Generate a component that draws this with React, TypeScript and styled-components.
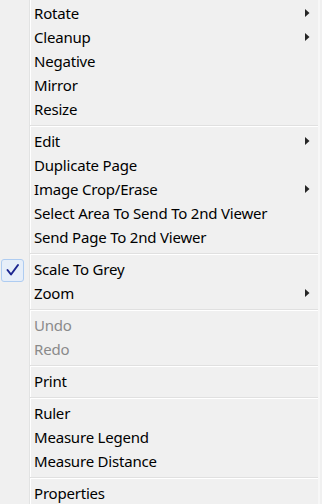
import React from 'react';
import styled, { createGlobalStyle } from 'styled-components';

const GlobalStyle = createGlobalStyle`
  html, body {
    margin: 0;
    padding: 0;
    background: #f0f0f0;
  }
`;

const Menu = styled.ul`
  list-style: none;
  margin: 0;
  padding: 2px 0 0 0;
  width: 320px;
  height: 504px;
  overflow: hidden;
  box-sizing: border-box;
  border-right: 2px solid #f7f7f7;
  background-color: #f0f0f0;
  background-image: linear-gradient(
    to right,
    transparent 29px,
    #e2e3e3 29px,
    #e2e3e3 30px,
    #ffffff 30px,
    #ffffff 31px,
    transparent 31px
  );
  font-family: 'Noto Sans', 'Open Sans', sans-serif;
  font-size: 15px;
  letter-spacing: -0.2px;
  color: #000;
`;

const Row = styled.li<{ $disabled?: boolean }>`
  display: grid;
  grid-template-columns: 34px 1fr 13px;
  align-items: center;
  height: 24px;
  color: ${(p) => (p.$disabled ? '#8a8a8a' : '#000')};
  white-space: nowrap;
`;

const Gutter = styled.span`
  display: flex;
  align-items: center;
  height: 24px;
  padding-left: 1px;
`;

const CheckBox = styled.span`
  display: flex;
  align-items: center;
  justify-content: center;
  width: 23px;
  height: 23px;
  box-sizing: border-box;
  border: 1px solid #aeccf1;
  border-radius: 3px;
  background: #e6eef9;
`;

const Label = styled.span`
  line-height: 22px;
  padding-bottom: 2px;
`;

const Arrow = styled.span`
  display: flex;
  align-items: center;
  height: 24px;
  margin-top: -3px;
`;

const Separator = styled.li`
  height: 8px;
  margin-left: 30px;
  display: flex;
  flex-direction: column;
  justify-content: center;
  &::before {
    content: '';
    height: 1px;
    background: #e0e0e0;
  }
  &::after {
    content: '';
    height: 1px;
    background: #ffffff;
  }
`;

type Item =
  | { sep: true }
  | { label: string; sub?: boolean; checked?: boolean; disabled?: boolean };

const items: Item[] = [
  { label: 'Rotate', sub: true },
  { label: 'Cleanup', sub: true },
  { label: 'Negative' },
  { label: 'Mirror' },
  { label: 'Resize' },
  { sep: true },
  { label: 'Edit', sub: true },
  { label: 'Duplicate Page' },
  { label: 'Image Crop/Erase', sub: true },
  { label: 'Select Area To Send To 2nd Viewer' },
  { label: 'Send Page To 2nd Viewer' },
  { sep: true },
  { label: 'Scale To Grey', checked: true },
  { label: 'Zoom', sub: true },
  { sep: true },
  { label: 'Undo', disabled: true },
  { label: 'Redo', disabled: true },
  { sep: true },
  { label: 'Print' },
  { sep: true },
  { label: 'Ruler' },
  { label: 'Measure Legend' },
  { label: 'Measure Distance' },
  { sep: true },
  { label: 'Properties' },
];

const SubArrow = () => (
  <svg width="5" height="8" viewBox="0 0 5 8">
    <path d="M0 0 L4.5 4 L0 8 Z" fill="#262626" />
  </svg>
);

const CheckMark = () => (
  <svg width="14" height="14" viewBox="0 0 14 14">
    <path
      d="M1.5 7 L5 11.5 L12 2"
      fill="none"
      stroke="#1c2690"
      strokeWidth="2"
      strokeLinecap="round"
      strokeLinejoin="round"
    />
  </svg>
);

export default function App() {
  return (
    <>
      <GlobalStyle />
      <Menu>
        {items.map((it, i) =>
          'sep' in it ? (
            <Separator key={i} />
          ) : (
            <Row key={i} $disabled={it.disabled}>
              <Gutter>
                {it.checked && (
                  <CheckBox>
                    <CheckMark />
                  </CheckBox>
                )}
              </Gutter>
              <Label>{it.label}</Label>
              <Arrow>{it.sub && <SubArrow />}</Arrow>
            </Row>
          )
        )}
      </Menu>
    </>
  );
}
